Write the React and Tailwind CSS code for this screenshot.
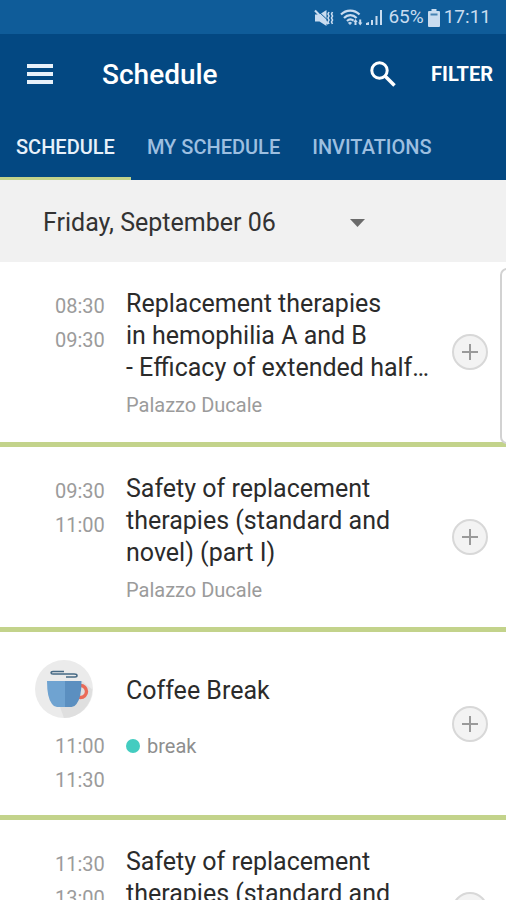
const sessions = [
  {
    start: "08:30",
    end: "09:30",
    title: "Replacement therapies\nin hemophilia A and B\n- Efficacy of extended half…",
    place: "Palazzo Ducale",
  },
  {
    start: "09:30",
    end: "11:00",
    title: "Safety of replacement\ntherapies (standard and\nnovel) (part I)",
    place: "Palazzo Ducale",
  },
  { start: "11:00", end: "11:30", title: "Coffee Break", tag: "break" },
  {
    start: "11:30",
    end: "13:00",
    title: "Safety of replacement\ntherapies (standard and\nnovel) (part II)",
    place: "Palazzo Ducale",
  },
];

function MuteIcon() {
  return (
    <svg width="20" height="18" viewBox="0 0 20 18" fill="none" stroke="currentColor" aria-hidden="true">
      <path d="M1 5.500h4.500L12.500 1v16l-7-4.500H1z" fill="currentColor" stroke="none" />
      <path d="M4 2l9 8.500" stroke="#0f5c99" strokeWidth="1" />
      <path d="M1 1.500l13 13.500" strokeWidth="2" />
      <path d="M15 3l-1 2 1 2-1 2 1 2-1 2 1 2M18.500 3l-1 2 1 2-1 2 1 2-1 2 1 2" strokeWidth="1.600" />
    </svg>
  );
}

function WifiIcon() {
  return (
    <svg width="23" height="18" viewBox="0 0 23 18" fill="none" stroke="currentColor" aria-hidden="true">
      <path d="M1 5.500C6 .3 14.500.3 19.500 5.500M4 9c3.600-3.800 9-3.800 12.600 0M7 12c2-2 4.600-2 6.600-.3" strokeWidth="2.200" />
      <path d="M8.500 13.800q1.500-1.200 3 0L10 15.500z" fill="currentColor" />
      <path d="M15.500 10l2.200 3h-1.200v3h-2v-3h-1.200zM20.200 16.500l-2.200-3h1.200v-3h2v3h1.200z" fill="currentColor" stroke="none" />
    </svg>
  );
}

function SignalIcon() {
  return (
    <svg width="17" height="17" viewBox="0 0 17 17" fill="currentColor" aria-hidden="true">
      <path d="M0 16v-2l3-1v3zM5 16v-5h2v5zM9.500 16V7h2v9zM14 16V1h2v15z" />
    </svg>
  );
}

function BatteryIcon() {
  return (
    <svg width="12" height="18" viewBox="0 0 12 18" fill="currentColor" aria-hidden="true">
      <path d="M3.500 0h5v2H11q1 0 1 1v14q0 1-1 1H1q-1 0-1-1V3q0-1 1-1h2.500z" />
      <path d="M2.500 4.500h7v2h-7z" fill="#0f5c99" opacity=".7" />
    </svg>
  );
}

function CoffeeIcon() {
  return (
    <svg className="-ml-5 block size-[58px] shrink-0" viewBox="0 0 58 58" aria-hidden="true">
      <circle cx="29" cy="29" r="29" fill="#ebebeb" />
      <path d="M47 21l10.300 8.500A29 29 0 0 1 29 58l-4-11z" fill="#dfdfdf" />
      <circle cx="45.500" cy="31.500" r="6" fill="none" stroke="#ea6a57" strokeWidth="3.400" />
      <path d="M12 21h18v26h-8q-3 0-5-3-5-6-5-23z" fill="#6fa3d1" />
      <path d="M30 21h16.500q0 17-5 23-2 3-5 3H30z" fill="#5b8fc0" />
      <path d="M29 11.500H18q-2 0-2 1.200t2 1.300h21q3 0 3 1.500t-2 1.500H31" fill="none" stroke="#466984" strokeWidth="1.500" />
    </svg>
  );
}

function Session({ start, end, title, place, tag }) {
  const times = (
    <div className="text-xl leading-[34px] text-[#9b9b9b]">
      <time className="block">{start}</time>
      <time className="block">{end}</time>
    </div>
  );
  return (
    <li className="flex items-center border-b-[5px] border-[#c3d38b] pr-[18px] pl-[55px]">
      {tag ? (
        <div className="grow pt-7 pb-[18px]">
          <div className="flex h-[58px] items-center">
            <div className="w-[71px] shrink-0">
              <CoffeeIcon />
            </div>
            <h2 className="pt-1 text-[25px] leading-8 text-[#2b2b2b]">{title}</h2>
          </div>
          <div className="mt-[11px] flex">
            <div className="w-[71px] shrink-0">{times}</div>
            <p className="flex h-[34px] items-center gap-[7px] text-xl text-[#8e8e8e]">
              <span className="size-[14px] rounded-full bg-[#43ccc0]" />
              {tag}
            </p>
          </div>
        </div>
      ) : (
        <div className="flex grow pt-[26px] pb-[23px]">
          <div className="w-[71px] shrink-0 pt-px">{times}</div>
          <div>
            <h2 className="text-[25px] leading-8 whitespace-pre-line text-[#2b2b2b]">{title}</h2>
            <p className="mt-[7px] text-xl leading-7 text-[#9b9b9b]">{place}</p>
          </div>
        </div>
      )}
      <button
        type="button"
        aria-label="Add to my schedule"
        className="flex size-9 shrink-0 items-center justify-center rounded-full border-2 border-[#d8d8d8] bg-[#f3f3f3] text-[#9a9a9a]"
      >
        <svg width="18" height="18" viewBox="0 0 18 18" fill="none" stroke="currentColor" strokeWidth="2" aria-hidden="true">
          <path d="M9 1v16M1 9h16" />
        </svg>
      </button>
    </li>
  );
}

export default function App() {
  return (
    <div className="flex h-screen flex-col overflow-hidden bg-white font-['Roboto',sans-serif]">
      <div className="flex h-[34px] shrink-0 items-center justify-end bg-[#0f5c99] pt-px pr-[15px] text-[19px] text-[#c9dcf0]">
        <MuteIcon />
        <span className="ml-[6px]"><WifiIcon /></span>
        <span className="ml-[3px]"><SignalIcon /></span>
        <span className="ml-[5px]">65%</span>
        <span className="mx-1"><BatteryIcon /></span>
        <time>17:11</time>
      </div>
      <header className="shrink-0 bg-[#034882] text-white">
        <div className="flex h-20 items-center pr-[13px] pl-[27px]">
          <button type="button" aria-label="Open menu">
            <svg width="26" height="20" viewBox="0 0 26 20" fill="#e8f1fa" aria-hidden="true">
              <path d="M0 0h26v4H0zM0 8h26v4H0zM0 16h26v4H0z" />
            </svg>
          </button>
          <h1 className="ml-[49px] grow pt-[2px] text-[28px] font-medium">Schedule</h1>
          <button type="button" aria-label="Search" className="mr-[35px]">
            <svg width="26" height="26" viewBox="0 0 26 26" fill="none" stroke="currentColor" strokeWidth="3" aria-hidden="true">
              <circle cx="9.500" cy="9.500" r="7.700" />
              <path d="M15 15l9.500 9.500" strokeWidth="3.600" />
            </svg>
          </button>
          <button type="button" className="text-xl font-bold">FILTER</button>
        </div>
        <nav className="flex h-[66px] text-xl font-medium text-[#9dbfe0]">
          <a href="#schedule" aria-current="page" className="flex items-center border-b-[3px] border-[#c3d38b] px-4 pt-[3px] text-[#e8f1fa]">SCHEDULE</a>
          <a href="#my-schedule" className="flex items-center border-b-[3px] border-transparent px-4 pt-[3px]">MY SCHEDULE</a>
          <a href="#invitations" className="flex items-center border-b-[3px] border-transparent px-4 pt-[3px]">INVITATIONS</a>
        </nav>
      </header>
      <div className="flex h-[82px] shrink-0 items-center bg-[#f1f1f1] pt-[3px] pl-[43px]">
        <div className="relative w-[322px]">
          <select aria-label="Day" className="w-full appearance-none bg-transparent text-[25px] leading-8 text-[#333]">
            <option>Friday, September 06</option>
          </select>
          <svg className="pointer-events-none absolute top-1/2 right-0 -translate-y-1/2" width="15" height="8" viewBox="0 0 15 8" fill="#6b6b6b" aria-hidden="true">
            <path d="M0 0h15L7.500 8z" />
          </svg>
        </div>
      </div>
      <main className="relative min-h-0 grow overflow-hidden">
        <ul>
          {sessions.map((s) => (
            <Session key={s.start} {...s} />
          ))}
        </ul>
        <div className="absolute top-[6px] -right-2 h-[176px] w-[14px] rounded-lg border-2 border-[#d2d2d2] bg-white" />
      </main>
    </div>
  );
}
